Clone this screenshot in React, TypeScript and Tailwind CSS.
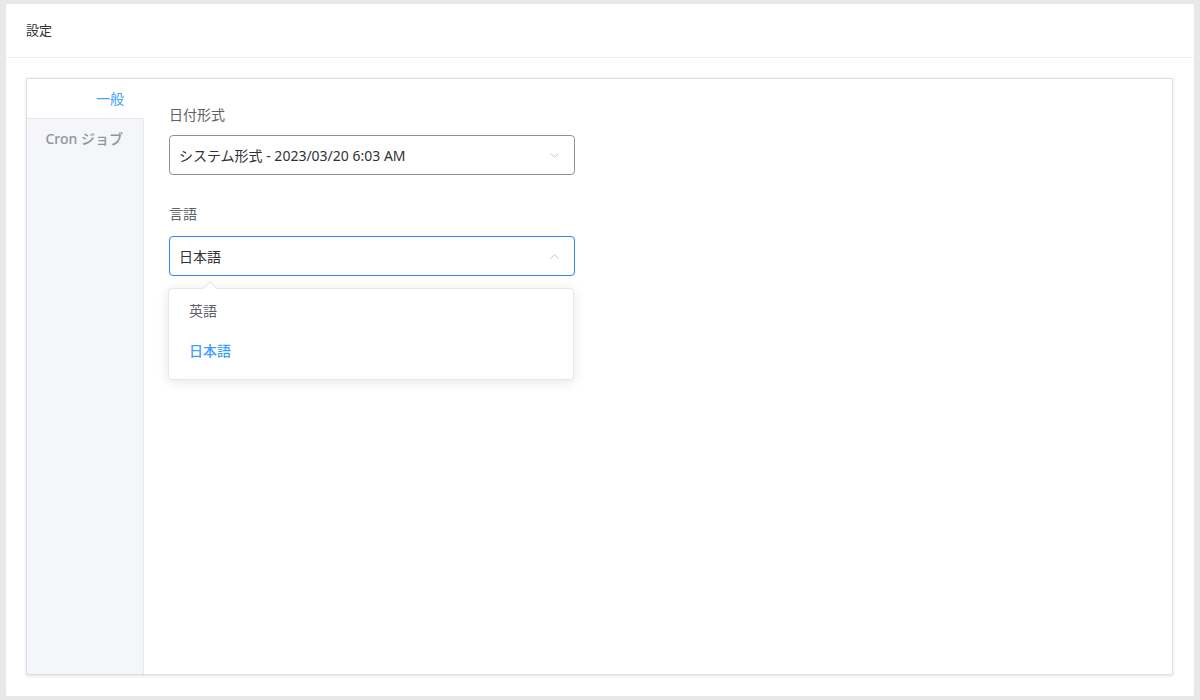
import { ChevronDown, ChevronUp } from 'lucide-react';

const FONT = { fontFamily: '"Segoe UI", "Noto Sans", "Noto Sans CJK JP", sans-serif' };

function Select({ value, open }: { value: string; open?: boolean }) {
  return (
    <div
      className={`flex items-center justify-between w-[406px] h-[40px] rounded-[4px] bg-white pl-[9px] pr-[12px] ${
        open ? 'border-[1.5px] border-[#2f86e0]' : 'border border-[#8e9196]'
      }`}
    >
      <span className="text-[14px] text-[#303133]">{value}</span>
      {open ? (
        <ChevronUp className="w-[15px] h-[15px] text-[#c0c4cc]" strokeWidth={1.5} />
      ) : (
        <ChevronDown className="w-[15px] h-[15px] text-[#c0c4cc]" strokeWidth={1.5} />
      )}
    </div>
  );
}

export default function App() {
  return (
    <div className="w-[1200px] h-[700px] bg-[#e8e8eb] pt-[4px] pl-[6px] pr-[6px] pb-[4px]" style={FONT}>
      <div className="w-full h-full bg-white rounded-[2px] flex flex-col">
        {/* ヘッダー */}
        <div className="h-[54px] flex items-center px-[20px] border-b border-[#f0f0f4] shrink-0">
          <span className="text-[13px] text-[#303133]">設定</span>
        </div>

        <div className="flex-1 pt-[20px] pl-[20px] pr-[21px] pb-[21px]">
          <div className="h-full flex border border-[#dcdfe6] shadow-[0_1px_3px_rgba(0,0,0,0.12)]">
            {/* タブ */}
            <div className="w-[117px] bg-[#f5f6fa] border-r border-[#e4e7ed] flex flex-col shrink-0">
              <div className="h-[39px] bg-white flex items-center justify-end pr-[20px] -mr-px">
                <span className="text-[14px] text-[#409eff]">一般</span>
              </div>
              <div className="h-[40px] flex items-center justify-end pr-[20px] border-t border-[#e4e7ed]">
                <span className="text-[14px] font-medium text-[#909399]">Cron ジョブ</span>
              </div>
            </div>

            {/* 内容 */}
            <div className="flex-1 pl-[25px] pt-[26px]">
              <div className="text-[14px] text-[#606266] leading-[20px] mb-[10px]">日付形式</div>
              <Select value="システム形式 - 2023/03/20 6:03 AM" />

              <div className="text-[14px] text-[#606266] leading-[20px] mt-[29px] mb-[12px]">言語</div>
              <div className="relative">
                <Select value="日本語" open />
                {/* ドロップダウン */}
                <div className="absolute left-[-1px] top-[52px] w-[406px] bg-white border border-[#e4e7ed] rounded-[4px] shadow-[0_2px_12px_rgba(0,0,0,0.1)] pt-[1px] pb-[9px]">
                  <div className="absolute -top-[6px] left-[36px] w-[10px] h-[10px] bg-white border-l border-t border-[#e4e7ed] rotate-45" />
                  <div className="h-[40px] flex items-center px-[20px] text-[14px] text-[#606266]">英語</div>
                  <div className="h-[40px] flex items-center px-[20px] text-[14px] text-[#409eff] font-medium">日本語</div>
                </div>
              </div>
            </div>
          </div>
        </div>
      </div>
    </div>
  );
}
